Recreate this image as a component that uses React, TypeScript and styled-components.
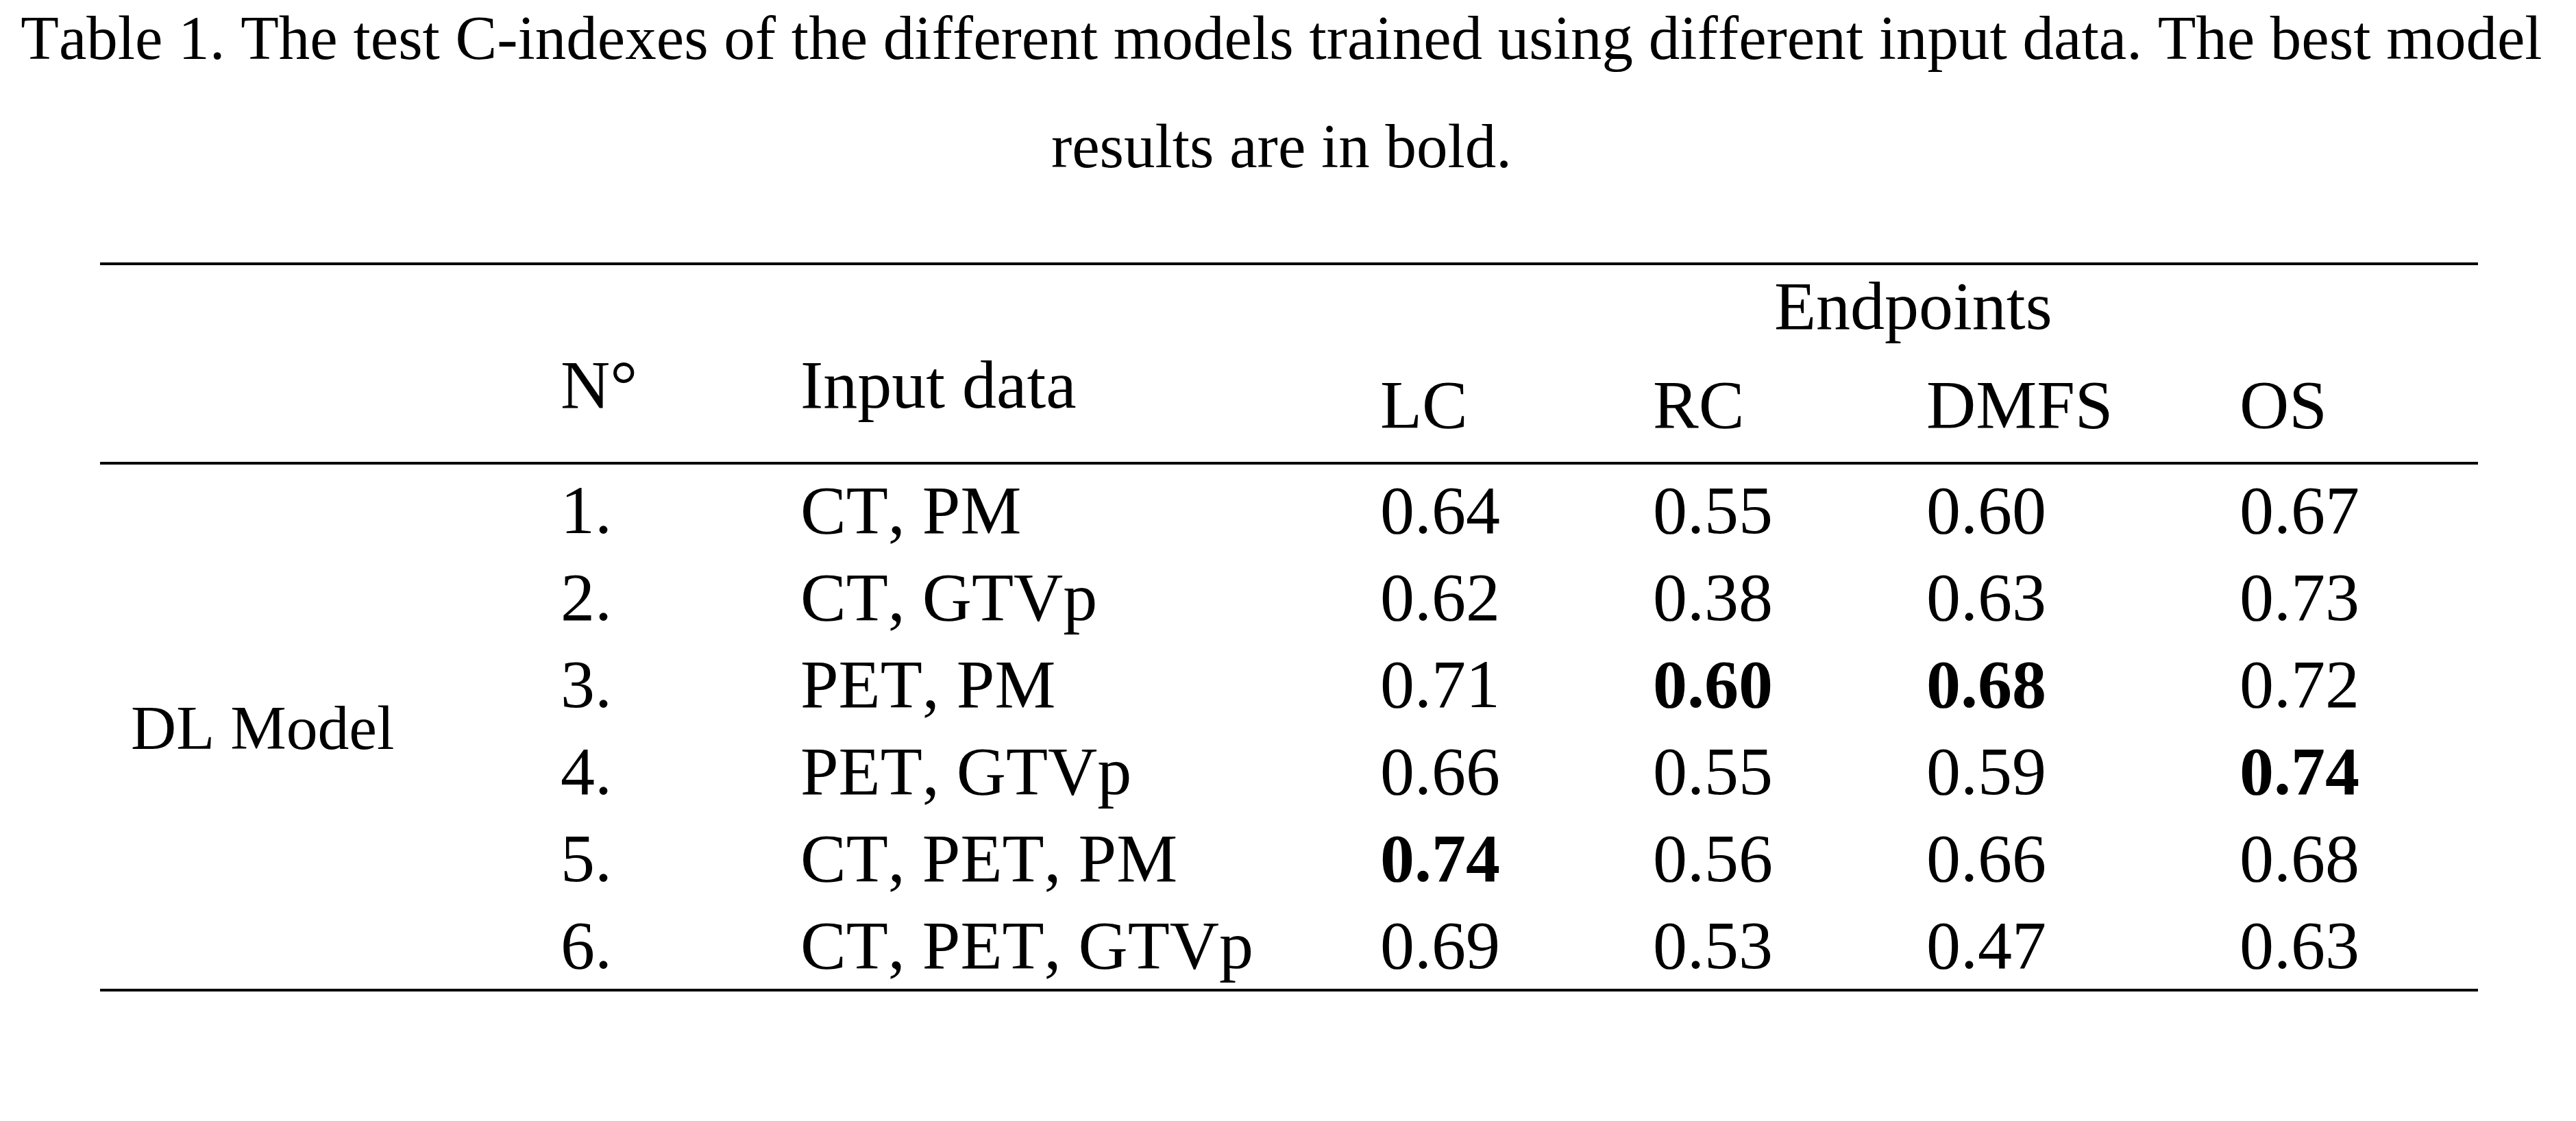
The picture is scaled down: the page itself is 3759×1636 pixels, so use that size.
import React from "react";
import styled, { createGlobalStyle } from "styled-components";

const GlobalStyle = createGlobalStyle`
  html, body {
    margin: 0;
    padding: 0;
    background: #ffffff;
  }
  body {
    font-family: "Liberation Serif", "Times New Roman", serif;
    color: #000000;
    font-kerning: none;
  }
`;

const Page = styled.main`
  width: 3759px;
  min-height: 1636px;
  background: #ffffff;
  overflow: hidden;
`;

const Caption = styled.p`
  width: 3740px;
  margin: -23px 0 0 0;
  font-size: 91px;
  line-height: 158px;
  text-align: center;
  font-weight: 400;
`;

const COLS = "672px 350px 846px 398px 399px 457px 348px";

const Table = styled.section`
  margin: 90px 0 0 146px;
  width: 3470px;
  border-top: 4px solid #000;
  border-bottom: 4px solid #000;
`;

const Head = styled.div`
  display: grid;
  grid-template-columns: ${COLS};
  grid-template-rows: 115px 115px;
  row-gap: 29px;
  padding: 2px 0 26px;
  border-bottom: 4px solid #000;
  font-size: 100px;
  line-height: 115px;
`;

const HeadCell = styled.div<{ $col: number; $row?: string; $top?: number }>`
  grid-column: ${(p) => p.$col};
  grid-row: ${(p) => p.$row ?? "2"};
  padding-top: ${(p) => p.$top ?? 0}px;
  white-space: nowrap;
`;

const SpanHead = styled.div`
  grid-column: 4 / span 4;
  grid-row: 1;
  padding-left: 575px;
  white-space: nowrap;
`;

const Body = styled.div`
  display: grid;
  grid-template-columns: ${COLS};
  grid-auto-rows: 127px;
  padding-top: 3px;
  font-size: 100px;
  line-height: 127px;
`;

const GroupLabel = styled.div`
  grid-column: 1;
  grid-row: 1 / span 6;
  align-self: center;
  padding-left: 45px;
  font-size: 91.7px;
  line-height: 127px;
  white-space: nowrap;
`;

const Row = styled.div`
  display: contents;
`;

const Cell = styled.div<{ $col: number; $bold?: boolean }>`
  grid-column: ${(p) => p.$col};
  font-weight: ${(p) => (p.$bold ? 700 : 400)};
  white-space: nowrap;
`;

type Model = {
  n: string;
  input: string;
  values: [string, string, string, string];
  best: number[];
};

const rows: Model[] = [
  { n: "1.", input: "CT, PM", values: ["0.64", "0.55", "0.60", "0.67"], best: [] },
  { n: "2.", input: "CT, GTVp", values: ["0.62", "0.38", "0.63", "0.73"], best: [] },
  { n: "3.", input: "PET, PM", values: ["0.71", "0.60", "0.68", "0.72"], best: [1, 2] },
  { n: "4.", input: "PET, GTVp", values: ["0.66", "0.55", "0.59", "0.74"], best: [3] },
  { n: "5.", input: "CT, PET, PM", values: ["0.74", "0.56", "0.66", "0.68"], best: [0] },
  { n: "6.", input: "CT, PET, GTVp", values: ["0.69", "0.53", "0.47", "0.63"], best: [] },
];

const endpoints = ["LC", "RC", "DMFS", "OS"];

export default function App() {
  return (
    <>
      <GlobalStyle />
      <Page>
        <Caption>
          Table 1. The test C-indexes of the different models trained using different input data. The best model results are in bold.
        </Caption>
        <Table>
          <Head>
            <HeadCell $col={2} $row="1 / span 2" $top={115}>
              N°
            </HeadCell>
            <HeadCell $col={3} $row="1 / span 2" $top={115}>
              Input data
            </HeadCell>
            <SpanHead>Endpoints</SpanHead>
            {endpoints.map((e, i) => (
              <HeadCell key={e} $col={4 + i}>
                {e}
              </HeadCell>
            ))}
          </Head>
          <Body>
            <GroupLabel>DL Model</GroupLabel>
            {rows.map((r) => (
              <Row key={r.n}>
                <Cell $col={2}>{r.n}</Cell>
                <Cell $col={3}>{r.input}</Cell>
                {r.values.map((v, i) => (
                  <Cell key={i} $col={4 + i} $bold={r.best.includes(i)}>
                    {v}
                  </Cell>
                ))}
              </Row>
            ))}
          </Body>
        </Table>
      </Page>
    </>
  );
}
